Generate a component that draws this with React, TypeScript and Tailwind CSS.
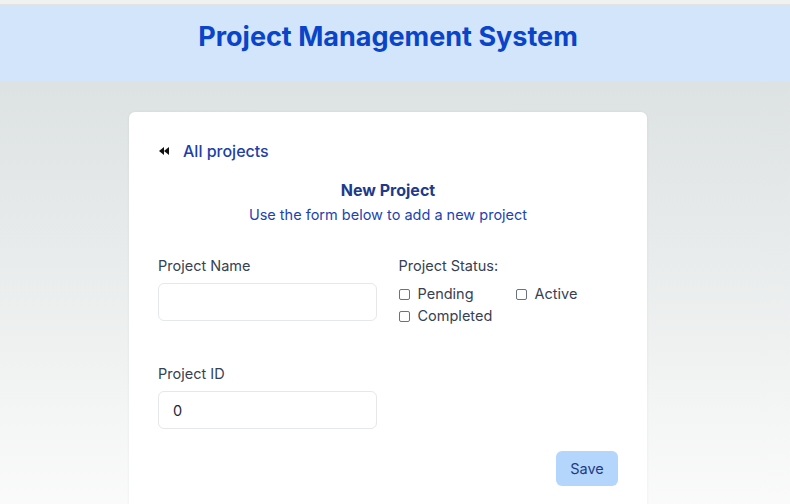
import React from 'react';

/* ── Small pieces ────────────────────────────────────────────────── */

function BackIcon() {
  return (
    <svg width="10" height="8" viewBox="0 0 10 8" aria-hidden="true">
      <path d="M5 0 L0 4 L5 8 Z" fill="#111" />
      <path d="M10 0 L5 4 L10 8 Z" fill="#111" />
    </svg>
  );
}

function StatusBox({ label }: { label: string }) {
  return (
    <label className="flex items-center gap-[8px] text-[14.5px] leading-[20px] text-gray-700">
      <span className="h-[11px] w-[11px] rounded-[2px] border border-gray-500 bg-white" />
      {label}
    </label>
  );
}

/* ── Page ────────────────────────────────────────────────────────── */

export default function App() {
  return (
    <div
      className="min-h-[504px] bg-gradient-to-b from-[#d7dddd] to-[#fbfbfb]"
      style={{ fontFamily: 'Inter, "Noto Sans", sans-serif' }}
    >
      <div className="h-[5px] border-b border-[#e2e4e4] bg-[#f0f1f1]" />

      <header className="bg-[#d3e5fb] pr-[14px]">
        <h1 className="pb-[27px] pt-[14px] text-center text-[27px] font-bold leading-[36px] text-[#0a44c8]">
          Project Management System
        </h1>
      </header>

      <main className="flex justify-center pr-[14px] pt-[30px]">
        <section className="w-[518px] rounded-md bg-white px-[29px] pb-[30px] pt-[27px] shadow-[0_0_3px_rgba(0,0,0,0.06)]">
          <a href="#" className="flex items-center gap-[14px] pl-[1px] text-[16px] font-medium leading-[24px] text-[#1e3fa8]">
            <BackIcon />
            All projects
          </a>

          <div className="mt-[16px] text-center">
            <h2 className="text-[16px] font-bold leading-[22px] text-[#1e3a8a]">New Project</h2>
            <p className="mt-[4px] text-[14.5px] leading-[20px] text-[#1d43b0]">
              Use the form below to add a new project
            </p>
          </div>

          <div className="mt-[31px] grid grid-cols-2 items-start gap-x-[21px]">
            <div>
              <div className="text-[14.5px] leading-[20px] text-gray-700">Project Name</div>
              <input
                type="text"
                className="mt-[7px] h-[38px] w-[219px] rounded-md border border-gray-200 px-[14px] text-[14.5px] text-gray-800 outline-none"
              />
            </div>

            <div>
              <div className="text-[14.5px] leading-[20px] text-gray-700">Project Status:</div>
              <div className="mt-[8px] grid grid-cols-[117px_auto] gap-y-[2px]">
                <StatusBox label="Pending" />
                <StatusBox label="Active" />
                <StatusBox label="Completed" />
              </div>
            </div>
          </div>

          <div className="mt-[38px]">
            <div className="text-[14.5px] leading-[20px] text-gray-700">Project ID</div>
            <input
              type="text"
              defaultValue="0"
              className="mt-[7px] h-[38px] w-[219px] rounded-md border border-gray-200 px-[14px] text-[14.5px] text-gray-800 outline-none"
            />
          </div>

          <div className="mt-[22px] flex justify-end">
            <button className="h-[35px] w-[62px] rounded-md bg-[#b5d6fc] text-[14.5px] text-[#1e3a8a]">
              Save
            </button>
          </div>
        </section>
      </main>
    </div>
  );
}
